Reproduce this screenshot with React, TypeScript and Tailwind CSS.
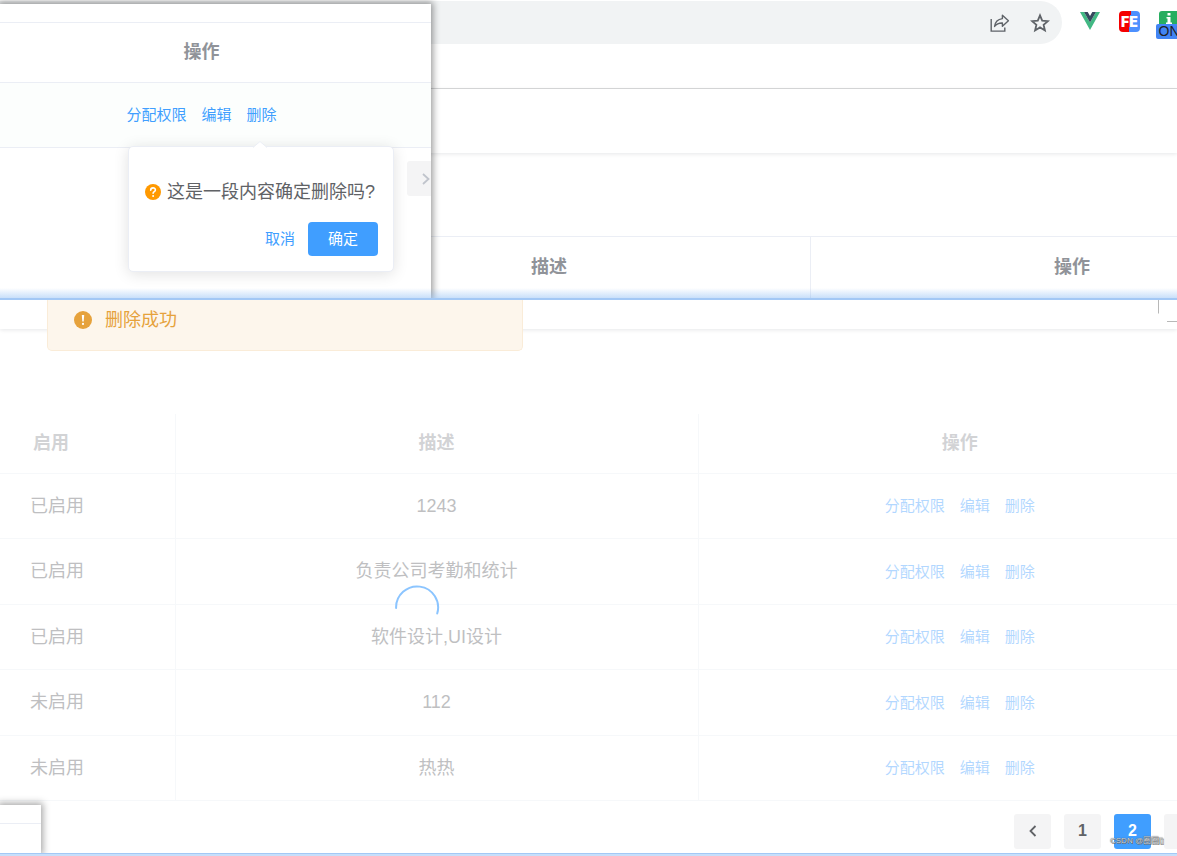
import React from "react";

const LINKS = ["分配权限", "编辑", "删除"];

const ROWS = [
  { status: "已启用", desc: "1243" },
  { status: "已启用", desc: "负责公司考勤和统计" },
  { status: "已启用", desc: "软件设计,UI设计" },
  { status: "未启用", desc: "112" },
  { status: "未启用", desc: "热热" },
];

function ActionLinks() {
  return (
    <div className="flex justify-center gap-[15px] text-[15px] leading-5 text-[#409eff]">
      {LINKS.map((label) => (
        <a key={label} href="#">
          {label}
        </a>
      ))}
    </div>
  );
}

function ShareIcon() {
  return (
    <svg className="h-5 w-5" viewBox="0 0 20 20" fill="none" stroke="#5f6368" strokeWidth="1.4">
      <path d="M1.2 6v12.1h13.6v-3.6" />
      <path d="M12.4 2.2l6 5.6-6 5.5v-3.3c-3.4-.1-5.9.9-7.8 3.4.5-4.2 3.2-7.2 7.8-7.8z" strokeLinejoin="round" />
    </svg>
  );
}

function StarIcon() {
  return (
    <svg className="h-5 w-5" viewBox="0 0 20 20" fill="none" stroke="#5f6368" strokeWidth="1.8">
      <path d="M10 2.4l2.2 5.2 5.7.5-4.300 3.700 1.300 5.600-4.900-3-4.900 3 1.300-5.600-4.300-3.700 5.700-.5z" />
    </svg>
  );
}

function VueIcon() {
  return (
    <svg className="h-[18px] w-5" viewBox="0 0 20 18">
      <path d="M0 0h4l6 10.600L16 0h4L10 18z" fill="#41b883" />
      <path d="M4 0h3.700L10 4l2.300-4H16l-6 10.600z" fill="#35495e" />
    </svg>
  );
}

function FeIcon() {
  return (
    <span className="flex h-[21px] w-[21px] items-center justify-center rounded-[4px] bg-[linear-gradient(95deg,#f40000_52%,#4d90fe_52%)] font-['Inter',sans-serif] text-[14px] font-black leading-none text-white">
      FE
    </span>
  );
}

function InfoExtension() {
  return (
    <span className="flex w-[26px] flex-col items-center">
      <span className="flex h-[13px] w-5 justify-center rounded-t-[3px] bg-[#27ae60]">
        <svg className="h-[13px] w-2" viewBox="0 0 8 13" fill="#fff">
          <path d="M2.500 2h3v2.500h-3zM1.500 6h4v5.500H7V13H1v-1.500h1.500v-4h-1z" />
        </svg>
      </span>
      <span className="h-[15px] w-full rounded-[2px] bg-[#4285f4] text-center text-[14px] leading-[15px] text-[#202124]">ON</span>
    </span>
  );
}

function ConfirmPopover() {
  return (
    <div
      role="dialog"
      className="absolute left-32 top-[142px] w-[266px] rounded-[5px] border border-[#ebeef5] bg-white px-4 pb-[15px] pt-[33px] shadow-[0_2px_15px_rgba(0,0,0,0.12)]"
    >
      <svg className="absolute left-[124px] top-[-6px] h-[7px] w-[14px]" viewBox="0 0 14 7">
        <path d="M0 6.500L7 0l7 6.500V7H0z" fill="#fff" />
        <path d="M0 6.500L7 .5l7 6" fill="none" stroke="#ebeef5" />
      </svg>
      <p className="flex items-center gap-[6px] whitespace-nowrap text-[18px] leading-6 text-[#606266]">
        <svg className="h-4 w-4 shrink-0" viewBox="0 0 16 16">
          <circle cx="8" cy="8" r="8" fill="#ff9900" />
          <path d="M5.700 6.300c0-3.200 4.700-3.200 4.700-.2 0 1.600-2.300 1.500-2.300 3.200" fill="none" stroke="#fff" strokeWidth="1.600" strokeLinecap="round" />
          <circle cx="8.100" cy="11.900" r="1" fill="#fff" />
        </svg>
        这是一段内容确定删除吗?
      </p>
      <div className="-mr-px mt-[18px] flex justify-end gap-[13px] text-[15px]">
        <button className="text-[#409eff]">取消</button>
        <button className="h-[34px] w-[70px] rounded-[4px] bg-[#409eff] text-white">确定</button>
      </div>
    </div>
  );
}

function ActionWindow() {
  return (
    <div className="absolute bottom-[2px] left-0 top-1 w-[431px] bg-white shadow-[0_0_7px_2px_rgba(0,0,0,0.4)]">
      <div className="h-[19px] border-b border-[#ebeef5]" />
      <h2 className="h-[60px] border-b border-[#ebeef5] pl-7 pr-14 text-center text-[18px] font-bold leading-[58px] text-[#909399]">
        操作
      </h2>
      <div className="flex h-[65px] items-center justify-center border-b border-[#ebeef5] bg-[#fcfefd] pr-7">
        <ActionLinks />
      </div>
      <div className="flex justify-end pt-[13px]">
        <button aria-label="下一页" className="flex h-[35px] w-6 items-center justify-end rounded-l-[3px] bg-[#f4f4f5]">
          <svg className="h-3 w-[10px]" viewBox="0 0 10 12" fill="none" stroke="#c0c4cc" strokeWidth="1.800">
            <path d="M2 1l5.500 5L2 11" />
          </svg>
        </button>
      </div>
      <ConfirmPopover />
    </div>
  );
}

function BrowserSection() {
  return (
    <section className="relative h-[300px] overflow-hidden bg-white">
      <div className="flex h-[89px] items-start border-b border-[#d9dadb] pt-px">
        <div className="flex h-[43px] min-w-0 flex-1 items-center justify-end gap-5 rounded-r-full bg-[#f1f3f4] pr-3">
          <ShareIcon />
          <StarIcon />
        </div>
        <div className="-mr-[5px] flex shrink-0 items-start gap-4 pl-[18px] pt-[10px]">
          <span className="mr-[3px] pt-px">
            <VueIcon />
          </span>
          <FeIcon />
          <InfoExtension />
        </div>
      </div>
      <div className="h-16 shadow-[0_1px_4px_rgba(0,21,41,0.1)]" />
      <table className="mt-[83px] w-[calc(100%+156px)] table-fixed border-collapse text-[18px] font-bold text-[#909399]">
        <colgroup>
          <col className="w-[288px]" />
          <col />
          <col />
        </colgroup>
        <thead>
          <tr className="h-[61px] border-t border-[#ebeef5]">
            <th />
            <th className="border-r border-[#ebeef5]">描述</th>
            <th>操作</th>
          </tr>
        </thead>
      </table>
      <ActionWindow />
      <div className="absolute inset-x-0 bottom-0 h-3 border-b-2 border-[#a3c8f5] bg-linear-to-b from-transparent to-[#64a5f0]/35" />
    </section>
  );
}

function SuccessMessage() {
  return (
    <div
      role="alert"
      className="absolute left-[47px] top-0 flex h-[51px] w-[476px] items-start gap-[13px] rounded-b-[5px] border border-t-0 border-[#faecd8] bg-[#fdf6ec] pl-[26px] pt-2 text-[18px] leading-6 text-[#e6a23c]"
    >
      <svg className="mt-[3px] h-[18px] w-[18px]" viewBox="0 0 18 18">
        <circle cx="9" cy="9" r="9" fill="#e6a23c" />
        <path d="M7.800 4h2.400l-.5 6.500H8.300z" fill="#fff" />
        <circle cx="9" cy="12.900" r="1.100" fill="#fff" />
      </svg>
      删除成功
    </div>
  );
}

function RoleTable() {
  return (
    <div className="relative">
      <table className="w-[calc(100%+44px)] table-fixed border-collapse text-center text-[18px] text-[#606266] opacity-40">
        <colgroup>
          <col className="w-[175px]" />
          <col />
          <col />
        </colgroup>
        <thead>
          <tr className="h-[59px] border-b border-[#ebeef5] font-bold text-[#909399]">
            <th className="border-r border-[#ebeef5] pl-[33px] pt-px text-left">启用</th>
            <th className="border-r border-[#ebeef5] pt-px">描述</th>
            <th className="pt-px">操作</th>
          </tr>
        </thead>
        <tbody>
          {ROWS.map((row) => (
            <tr key={row.desc} className="h-[65px] border-b border-[#ebeef5] even:h-[66px]">
              <td className="border-r border-[#ebeef5] pl-[30px] pt-px text-left">{row.status}</td>
              <td className="border-r border-[#ebeef5] pt-px">{row.desc}</td>
              <td className="pt-px">
                <ActionLinks />
              </td>
            </tr>
          ))}
        </tbody>
      </table>
      <svg className="absolute left-[394px] top-[170px] h-[46px] w-[46px]" viewBox="0 0 46 46" fill="none" stroke="#8cc5ff" strokeWidth="2">
        <path d="M2.100 24A21 21 0 1 1 43.200 29.500" strokeLinecap="round" />
      </svg>
    </div>
  );
}

function Pagination() {
  return (
    <nav aria-label="分页" className="-mr-6 flex justify-end gap-[13px] pt-[13px] text-[16px] font-bold text-[#606266]">
      <button aria-label="上一页" className="flex h-[35px] w-[37px] items-center justify-center rounded-[3px] bg-[#f4f4f5]">
        <svg className="h-3 w-[10px]" viewBox="0 0 10 12" fill="none" stroke="#606266" strokeWidth="1.800">
          <path d="M7.500 1L2.500 6l5 5" />
        </svg>
      </button>
      <button className="h-[35px] w-[37px] rounded-[3px] bg-[#f4f4f5]">1</button>
      <button className="h-[35px] w-[37px] rounded-[3px] bg-[#409eff] text-white">2</button>
      <button aria-label="下一页" className="h-[35px] w-[37px] rounded-[3px] bg-[#f4f4f5]" />
    </nav>
  );
}

function TableSection() {
  return (
    <section className="relative h-[553px] overflow-hidden bg-white">
      <div className="h-[29px] shadow-[0_1px_4px_rgba(0,21,41,0.1)]" />
      <div className="pt-[85px]">
        <RoleTable />
      </div>
      <Pagination />
      <SuccessMessage />
      <svg className="absolute right-0 top-0 h-[22px] w-[19px]" viewBox="0 0 19 22" stroke="#b8b8b8">
        <path d="M.5 0v13.500M9 21.500h10" />
      </svg>
      <div className="absolute bottom-0 left-0 h-12 w-[41px] bg-white shadow-[0_0_7px_2px_rgba(0,0,0,0.35)]">
        <div className="h-[19px] border-b border-[#ebeef5]" />
      </div>
      <span className="absolute bottom-[6px] right-[14px] whitespace-nowrap text-[8px] leading-3 text-[#d5d8dc] [text-shadow:0_0_1px_#333,1px_1px_0_#777]">
        CSDN @圈圈▯
      </span>
    </section>
  );
}

export default function App() {
  return (
    <main className="overflow-hidden bg-white font-['Liberation_Sans','Noto_Sans_CJK_SC',sans-serif]">
      <BrowserSection />
      <TableSection />
      <div className="h-[3px] border-t border-[#a3c8f5] bg-[#c6dffb]" />
    </main>
  );
}
